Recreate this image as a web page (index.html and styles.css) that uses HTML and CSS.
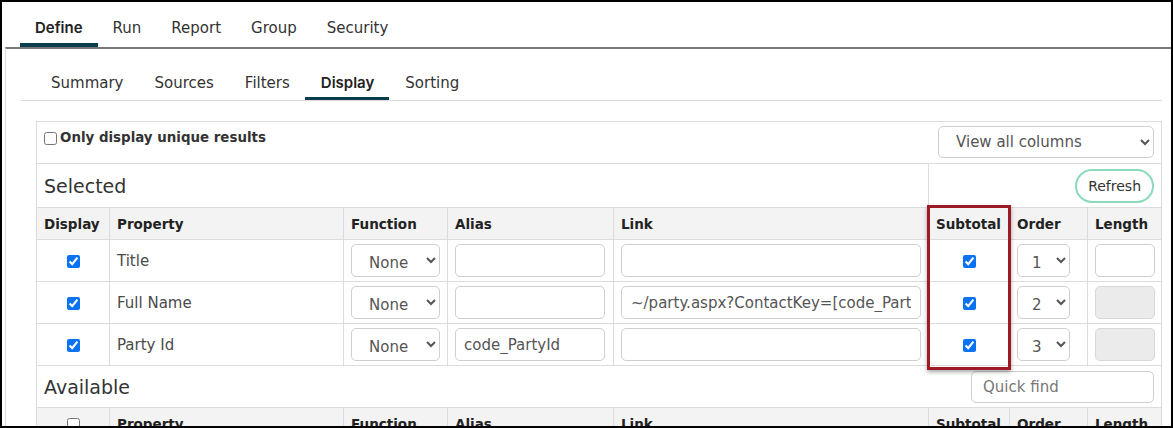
FILE: index.html
```html
<!DOCTYPE html>
<html lang="en">
<head>
<meta charset="utf-8">
<title>Query designer - Display</title>
<link rel="stylesheet" href="styles.css">
</head>
<body>
<div class="frame">
  <nav class="tabs">
    <a class="tab active">Define</a>
    <a class="tab">Run</a>
    <a class="tab">Report</a>
    <a class="tab">Group</a>
    <a class="tab">Security</a>
  </nav>
  <main class="content">
    <div class="inner">
      <nav class="subtabs">
        <a class="subtab">Summary</a>
        <a class="subtab">Sources</a>
        <a class="subtab">Filters</a>
        <a class="subtab active">Display</a>
        <a class="subtab">Sorting</a>
      </nav>
      <section class="panel">
        <table class="grid">
          <colgroup>
            <col class="c-display">
            <col class="c-property">
            <col class="c-function">
            <col class="c-alias">
            <col class="c-link">
            <col class="c-subtotal">
            <col class="c-order">
            <col class="c-length">
          </colgroup>
          <tr class="options">
            <td colspan="8">
              <div class="options-bar">
                <label class="unique"><input type="checkbox">Only display unique results</label>
                <select class="view-select"><option>View all columns</option></select>
              </div>
            </td>
          </tr>
          <tr class="section">
            <td colspan="5"><h2 class="section-title">Selected</h2></td>
            <td colspan="3" class="refresh-cell"><button class="refresh">Refresh</button></td>
          </tr>
          <tr class="head">
            <th>Display</th><th>Property</th><th>Function</th><th>Alias</th><th>Link</th><th>Subtotal</th><th>Order</th><th>Length</th>
          </tr>
          <tr class="row">
            <td class="center"><input type="checkbox" checked></td>
            <td class="prop">Title</td>
            <td><select class="fn"><option>None</option></select></td>
            <td><input class="field alias" type="text" value=""></td>
            <td><input class="field link" type="text" value=""></td>
            <td class="center"><input type="checkbox" checked></td>
            <td><select class="order"><option>1</option></select></td>
            <td><input class="field len" type="text" value=""></td>
          </tr>
          <tr class="row">
            <td class="center"><input type="checkbox" checked></td>
            <td class="prop">Full Name</td>
            <td><select class="fn"><option>None</option></select></td>
            <td><input class="field alias" type="text" value=""></td>
            <td><input class="field link" type="text" value="~/party.aspx?ContactKey=[code_PartyId]"></td>
            <td class="center"><input type="checkbox" checked></td>
            <td><select class="order"><option>2</option></select></td>
            <td><input class="field len" type="text" value="" disabled></td>
          </tr>
          <tr class="row">
            <td class="center"><input type="checkbox" checked></td>
            <td class="prop">Party Id</td>
            <td><select class="fn"><option>None</option></select></td>
            <td><input class="field alias" type="text" value="code_PartyId"></td>
            <td><input class="field link" type="text" value=""></td>
            <td class="center"><input type="checkbox" checked></td>
            <td><select class="order"><option>3</option></select></td>
            <td><input class="field len" type="text" value="" disabled></td>
          </tr>
          <tr class="section">
            <td colspan="8">
              <div class="available-bar">
                <h2 class="section-title">Available</h2>
                <input class="field quick" type="text" placeholder="Quick find">
              </div>
            </td>
          </tr>
          <tr class="head">
            <th class="center"><input type="checkbox"></th><th>Property</th><th>Function</th><th>Alias</th><th>Link</th><th>Subtotal</th><th>Order</th><th>Length</th>
          </tr>
        </table>
        <div class="highlight"></div>
      </section>
    </div>
  </main>
</div>
</body>
</html>
```

FILE: styles.css
```css
html, body {
  margin: 0;
  padding: 0;
  background: #fff;
}

body {
  font-family: "DejaVu Sans", "Liberation Sans", sans-serif;
  color: #333;
}

.frame {
  width: 1173px;
  height: 428px;
  box-sizing: border-box;
  border: 2px solid #000;
  overflow: hidden;
}

/* top level tabs */
.tabs {
  display: flex;
  margin-left: 18px;
}

.tab {
  padding: 16px 15px 5px;
  font-size: 15px;
  line-height: 20px;
  color: #333;
  border-bottom: 4px solid transparent;
}

.tab.active {
  font-family: "Inter", "DejaVu Sans", sans-serif;
  font-weight: 600;
  color: #222;
  border-bottom-color: #0c3d4c;
}

.content {
  margin-left: 3px;
  border-top: 2px solid #787878;
  border-left: 1px solid #dcdcdc;
  height: 400px;
}

.inner {
  margin: 0 9px 0 15px;
}

/* second level tabs */
.subtabs {
  display: flex;
  padding: 24px 0 0 14px;
  border-bottom: 1px solid #dcdcdc;
}

.subtab {
  padding: 0 15px 4px 16px;
  font-size: 15px;
  line-height: 20px;
  color: #333;
  border-bottom: 3px solid transparent;
}

.subtab.active {
  font-family: "Inter", "DejaVu Sans", sans-serif;
  font-weight: 600;
  color: #222;
  border-bottom-color: #0c3d4c;
}

/* display grid */
.panel {
  position: relative;
  margin: 20px 0 0 15px;
}

.grid {
  width: 1126px;
  table-layout: fixed;
  border-collapse: separate;
  border-spacing: 0;
  border-top: 1px solid #dcdcdc;
  border-left: 1px solid #dcdcdc;
}

.c-display { width: 73px; }
.c-property { width: 234px; }
.c-function { width: 104px; }
.c-alias { width: 166px; }
.c-link { width: 315px; }
.c-subtotal { width: 81px; }
.c-order { width: 78px; }
.c-length { width: 74px; }

.grid td,
.grid th {
  box-sizing: border-box;
  border-right: 1px solid #dcdcdc;
  border-bottom: 1px solid #dcdcdc;
  padding: 0 7px;
  vertical-align: middle;
  text-align: left;
}

.grid .center {
  text-align: center;
}

.grid input[type="checkbox"] {
  width: 13px;
  height: 13px;
  margin: 0;
  vertical-align: middle;
  accent-color: #0a72f5;
}

.options td {
  height: 42px;
  vertical-align: top;
  padding: 4px 7px 0 7px;
}

.options-bar {
  display: flex;
  justify-content: space-between;
  align-items: flex-start;
}

.unique {
  display: flex;
  align-items: center;
  margin-top: 2px;
  font-size: 13.4px;
  line-height: 20px;
  font-weight: bold;
  color: #333;
}

.unique input[type="checkbox"] {
  margin: 0 3px 0 0;
  accent-color: #0a72f5;
}

.view-select {
  width: 216px;
  height: 32px;
  border: 1px solid #cfcfcf;
  border-radius: 5px;
  background: #fff;
  color: #555;
  font-family: "DejaVu Sans", sans-serif;
  font-size: 15px;
  padding: 0 0 0 13px;
}

.section td {
  height: 44px;
}

.row td {
  height: 42px;
}

.section td[colspan="8"] {
  height: 42px;
}

.section-title {
  margin: 0;
  font-size: 19px;
  font-weight: normal;
  line-height: 24px;
  color: #333;
}

.refresh-cell {
  text-align: right !important;
}

.refresh {
  height: 34px;
  padding: 0 11px;
  border: 2px solid #8cd9bb;
  border-radius: 17px;
  background: #fff;
  color: #333;
  font-family: "DejaVu Sans", sans-serif;
  font-size: 14px;
}

.head th {
  height: 32px;
  background: #f3f3f3;
  font-size: 13.5px;
  font-weight: bold;
  color: #222;
}

.prop {
  font-size: 15px;
  color: #4a4a4a;
}

.fn,
.order {
  height: 33px;
  border: 1px solid #cfcfcf;
  border-radius: 5px;
  background: #fff;
  color: #555;
  font-family: "DejaVu Sans", sans-serif;
  font-size: 15px;
}

.fn {
  width: 89px;
  padding: 4px 0 0 13px;
}

.order {
  width: 53px;
  padding: 4px 0 0 10px;
}

.field {
  box-sizing: border-box;
  height: 33px;
  border: 1px solid #cfcfcf;
  border-radius: 5px;
  background: #fff;
  color: #555;
  font-family: "DejaVu Sans", sans-serif;
  font-size: 15px;
  padding: 0 9px;
  outline: none;
}

.field.alias { width: 150px; padding: 0 8px; }
.field.link { width: 300px; }
.field.len { width: 60px; }

.field:disabled {
  background: #ebebeb;
  border-color: #d8d8d8;
}

.available-bar {
  display: flex;
  justify-content: space-between;
  align-items: center;
}

.field.quick {
  width: 183px;
  height: 32px;
  padding: 0 11px;
}

.field.quick::placeholder {
  color: #777;
}

/* emphasis around the subtotal column */
.highlight {
  position: absolute;
  left: 891px;
  top: 84px;
  width: 84px;
  height: 165px;
  box-sizing: border-box;
  border: 3px solid #9d1b25;
  box-shadow: 0 2px 4px rgba(0, 0, 0, 0.35);
  pointer-events: none;
}
```
